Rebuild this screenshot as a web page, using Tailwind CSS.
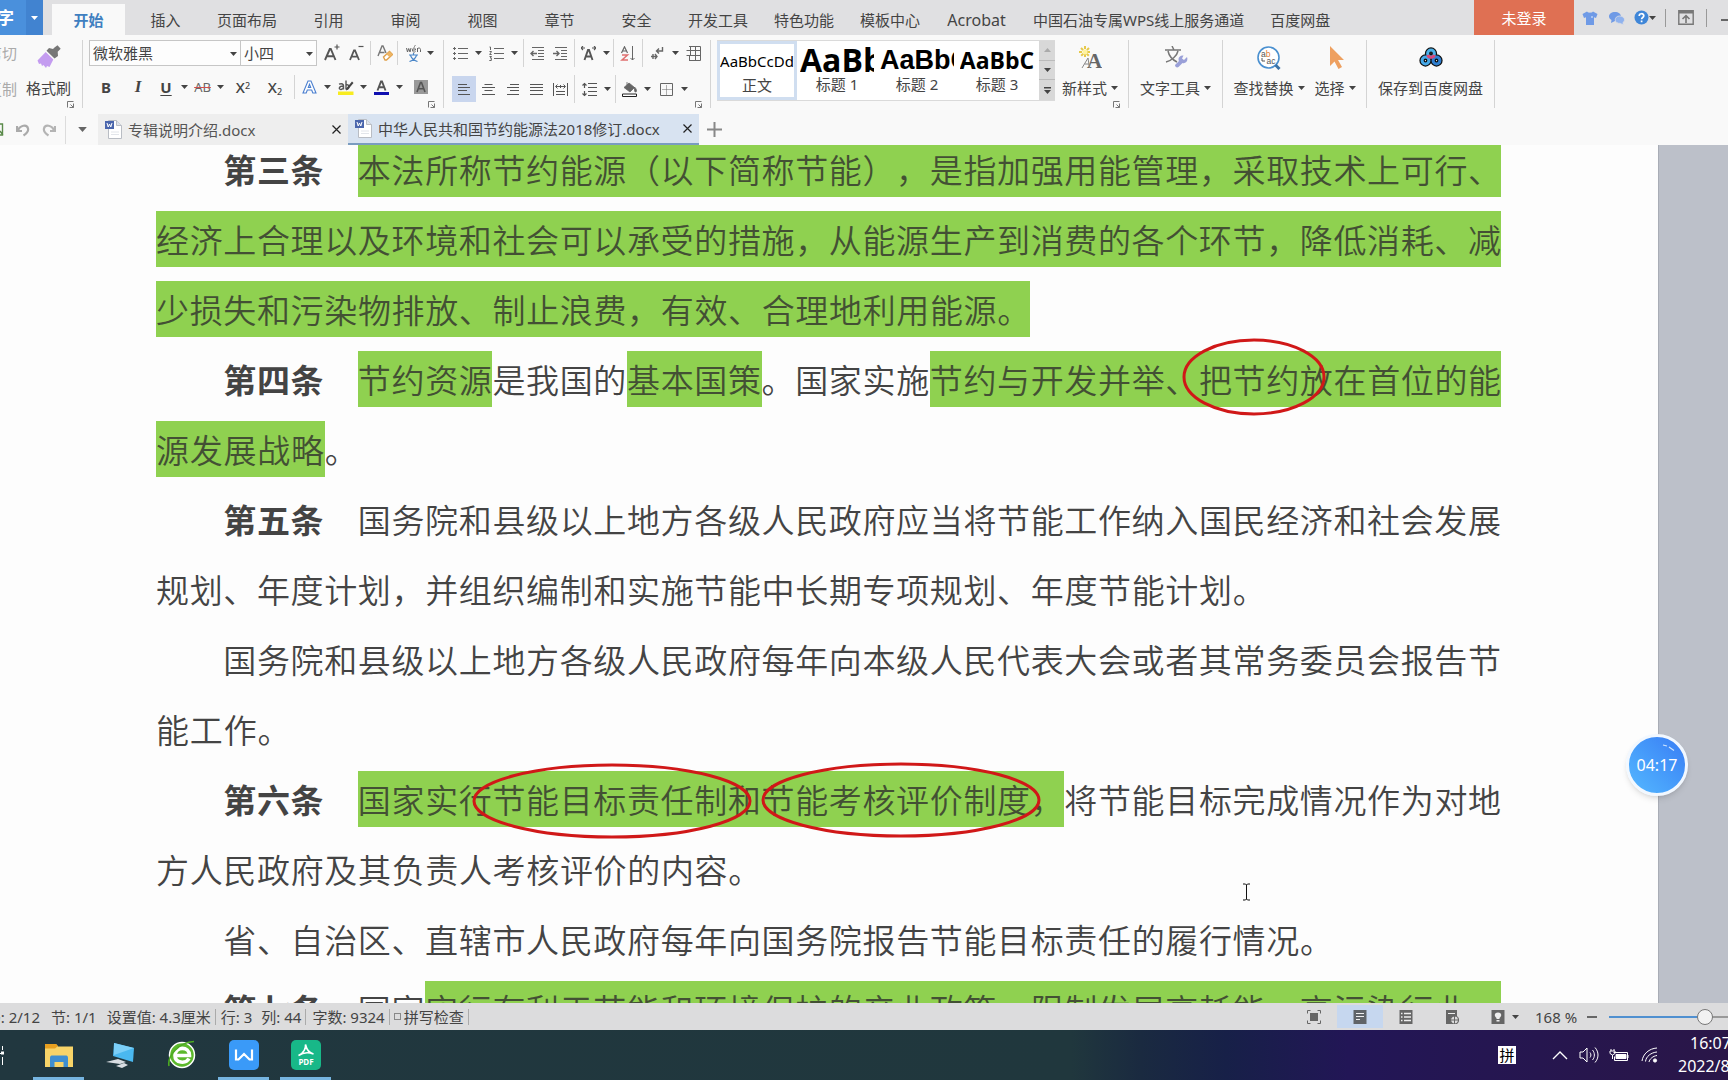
<!DOCTYPE html>
<html lang="zh-CN">
<head>
<meta charset="utf-8">
<title>中华人民共和国节约能源法2018修订.docx</title>
<script src="https://cdn.jsdelivr.net/npm/@tailwindcss/browser@4"></script>
</head>
<body class="flex h-screen flex-col overflow-hidden bg-[#f9f9f9] font-['Noto_Sans','Noto_Sans_CJK_SC',sans-serif] text-[15px] leading-5 text-[#444]">
<svg class="hidden">
  <symbol id="caret" viewBox="0 0 7 4"><path d="M0 0h7L3.500 4z" fill="currentColor"/></symbol>
  <symbol id="launcher" viewBox="0 0 7 7"><path d="M.5 6.500V.5h6M6.500 2.500v4h-4M3.500 3.500l3 3" fill="none" stroke="currentColor"/></symbol>
  <symbol id="doc" viewBox="0 0 17 19"><path d="M3.500 .5h8l5 5v13h-13z" fill="#fff" stroke="#b9bdc4"/><path d="M11.500 .5v5h5" fill="#dde3ec" stroke="#b9bdc4"/><path d="M0 1h9v8H0z" fill="#4a66ad"/><path d="M2 3l1.200 4L4.500 4l1.300 3L7 3" fill="none" stroke="#fff"/><path d="M6 12h8M6 14.500h8" stroke="#e2e5ea"/></symbol>
  <symbol id="close" viewBox="0 0 9 9"><path d="M.5.5l8 8M8.500.5l-8 8" stroke="currentColor" stroke-width="1.200" fill="none"/></symbol>
</svg>

<!-- menu tabs -->
<header class="flex h-[35px] shrink-0 whitespace-nowrap bg-[#e0e0e2]">
  <button class="flex w-[26px] shrink-0 items-center justify-end overflow-hidden bg-[#4a90dc] pr-3 text-[17px] font-bold text-white"><span>WPS文字</span></button>
  <button aria-label="菜单" class="flex w-[17px] shrink-0 items-center justify-center bg-[#4183d0] text-white"><svg class="h-1 w-[7px]"><use href="#caret"/></svg></button>
  <nav class="ml-[7px] flex flex-1 pt-1 [&>a]:flex [&>a]:min-w-[77px] [&>a]:shrink-0 [&>a]:items-center [&>a]:justify-center [&>a]:px-[13px]">
    <a href="#" class="border-x-2 border-transparent bg-[#f9f9f9] bg-clip-padding font-bold text-[#3f7fc0]">开始</a>
    <a href="#">插入</a><a href="#">页面布局</a><a href="#">引用</a><a href="#">审阅</a><a href="#">视图</a><a href="#">章节</a><a href="#">安全</a><a href="#">开发工具</a><a href="#">特色功能</a><a href="#">模板中心</a><a href="#" class="min-w-[87px]! text-[16px]">Acrobat</a><a href="#">中国石油专属WPS线上服务通道</a><a href="#">百度网盘</a>
  </nav>
  <button class="w-[100px] shrink-0 bg-[#df7053] text-white">未登录</button>
  <div class="flex shrink-0 items-center pl-2">
    <button aria-label="皮肤"><svg class="h-4 w-4" viewBox="0 0 16 16"><path d="M5 1.500c1 1.600 5 1.600 6 0l4.500 2.500-1.500 4-2-.8V15H4V7.200L2 8 .5 4z" fill="#6f9ae6"/><path d="M9 6h2v2H9z" fill="#a9c4f2"/></svg></button>
    <button aria-label="消息" class="ml-[10px]"><svg class="h-4 w-[18px]" viewBox="0 0 18 16"><path d="M7 2c3.500 0 6 2 6 4.500S10.500 11 7 11l-4 2 .5-3C2 9.300 1 8 1 6.500 1 4 3.500 2 7 2z" fill="#6f9ae6"/><path d="M11.500 6c3 0 5 1.600 5 3.700 0 1.300-.6 2.200-1.600 2.900l.5 2.400-3-1.600c-3 .2-5.200-1.400-5.200-3.500S8.800 6 11.500 6z" fill="#8fb2ee" stroke="#e0e0e2" stroke-width=".8"/></svg></button>
    <button aria-label="帮助" class="ml-2 flex items-center"><svg class="h-[15px] w-[15px]" viewBox="0 0 15 15"><circle cx="7.500" cy="7.500" r="7" fill="#3f86d8"/><path d="M5.200 6c0-3 4.600-3 4.600-.2 0 1.700-2.200 1.700-2.200 3.400M7.600 10.500v1.700" stroke="#fff" stroke-width="1.700" fill="none"/></svg><svg class="h-1 w-[7px]"><use href="#caret"/></svg></button>
    <span class="ml-[9px] h-[18px] w-px bg-[#999]"></span>
    <button aria-label="折叠功能区" class="ml-3"><svg class="h-[15px] w-4" viewBox="0 0 16 15"><path d="M.8.8h14.400v13.400H.8z" fill="none" stroke="#777" stroke-width="1.400"/><path d="M1 1h14v2.500H1z" fill="#777"/><path d="M8 13V6M4.500 9L8 5.700 11.500 9" fill="none" stroke="#777" stroke-width="1.600"/></svg></button>
    <span class="ml-3 h-[18px] w-px bg-[#999]"></span>
    <button aria-label="最小化" class="ml-[14px] mt-1 h-[2px] w-[7px] bg-[#666]"></button>
  </div>
</header>

<!-- ribbon -->
<section class="flex h-[79px] shrink-0 whitespace-nowrap pt-[5px] [&_svg]:shrink-0 [&_button]:shrink-0">
  <div class="relative flex h-[68px] border-r border-[#d4d4d4] pr-[11px]">
    <div class="flex w-[17px] flex-col gap-[10px] overflow-hidden text-[#aaa]">
      <button class="flex h-[26px] items-center justify-end">剪切</button>
      <button class="flex h-[26px] items-center justify-end">复制</button>
    </div>
    <button class="ml-[9px] flex flex-col items-center pt-[5px]">
      <svg class="h-6 w-6" viewBox="0 0 24 24"><path d="M17.500 2.500l3-2.200 3.200 3.500-3 3 .3 4.200-3.500 2.500L9.500 5.800 12 3l4 1z" fill="#777"/><path d="M8.700 7l7.600 7.500L12.500 22l-2.500-1-1 2-2.500-3-1.500 1-1-2.500-2 .5-1.500-3.500z" fill="#c49cf0"/></svg>
      <span class="mt-[9px]">格式刷</span>
    </button>
    <svg class="absolute bottom-0 right-2 h-[7px] w-[7px] text-[#777]"><use href="#launcher"/></svg>
  </div>

  <!-- font group -->
  <div class="relative flex h-[68px] w-[361px] shrink-0 flex-col gap-2 border-r border-[#d4d4d4] pl-[6px]">
    <div class="flex h-[26px] items-center">
      <div class="relative h-full w-[152px]"><select aria-label="字体" class="h-full w-full appearance-none border border-[#c6c6c6] bg-[#fdfdfd] pl-[3px]"><option>微软雅黑</option></select><svg class="absolute right-1 top-3 h-1 w-[7px]"><use href="#caret"/></svg></div>
      <div class="relative -ml-px h-full w-[77px]"><select aria-label="字号" class="h-full w-full appearance-none border border-[#c6c6c6] bg-[#fdfdfd] pl-[3px]"><option>小四</option></select><svg class="absolute right-1 top-3 h-1 w-[7px]"><use href="#caret"/></svg></div>
      <button aria-label="增大字号" class="ml-[3px] flex w-6 justify-center"><svg class="h-[18px] w-4" viewBox="0 0 16 18"><path d="M1 16L5.800 5h1L11.500 16M3 12.200h6.500" fill="none" stroke="#555" stroke-width="1.900"/><path d="M10.500 3h5M13 .5v5" stroke="#555" stroke-width="1.200"/></svg></button>
      <button aria-label="减小字号" class="flex w-6 justify-center"><svg class="h-[18px] w-4" viewBox="0 0 16 18"><path d="M2 16L6 6.500h1L11 16M3.700 12.700h5.600" fill="none" stroke="#555" stroke-width="1.800"/><path d="M10.500 2.500h5" stroke="#555" stroke-width="1.200"/></svg></button>
      <span class="mx-[2px] h-6 w-px bg-[#d4d4d4]"></span>
      <button aria-label="清除格式" class="flex w-6 justify-center"><svg class="h-4 w-4" viewBox="0 0 16 16"><path d="M1 11L5 1h1l3 7M2.500 7.500h5" fill="none" stroke="#777" stroke-width="1.400"/><path d="M6.500 12l6-5.500 3 3-6 5.500H8z" fill="#fff" stroke="#e0a04a" stroke-width="1.400"/><path d="M9.500 9.300l3-2.800 3 3-3 2.700z" fill="#edb565"/></svg></button>
      <span class="h-6 w-px bg-[#d4d4d4]"></span>
      <button aria-label="拼音指南" class="ml-[3px] flex w-6 justify-center"><svg class="h-[17px] w-[15px]" viewBox="0 0 15 17" fill="none"><path d="M.5 3l1 4 1.200-3.500L4 7l1-4M6.500 5h3C9.500 2 6.500 2.500 6.500 5s2 2.500 3 1.500M8 1.500l1.500-1M11.500 7V3M11.500 4.500c0-2 3-2 3 0V7" stroke="#666"/><path d="M3 10h9M7.500 8v2M4.500 10.500C5.500 13 8 15.500 11.500 16.500M10.500 10.500C9.500 13 7 15.500 3.500 16.500" stroke="#4a86c8" stroke-width="1.200"/></svg></button>
      <svg class="mx-[2px] h-1 w-[7px]"><use href="#caret"/></svg>
    </div>
    <div class="flex h-[26px] items-center pl-px">
      <button class="w-8 text-[15px] font-bold">B</button>
      <button class="w-8 font-['Liberation_Serif',serif] text-[17px] font-bold italic">I</button>
      <button class="w-6 text-[15px] font-bold underline underline-offset-2">U</button>
      <svg class="mx-[3px] h-1 w-[7px]"><use href="#caret"/></svg>
      <button class="w-[23px] text-[13px] text-[#666] line-through decoration-[#d05050]">AB</button>
      <svg class="mx-[3px] h-1 w-[7px]"><use href="#caret"/></svg>
      <button class="w-8 text-[15px] font-medium">X<sup class="text-[9px]">2</sup></button>
      <button class="w-8 text-[15px] font-medium">X<sub class="text-[9px]">2</sub></button>
      <span class="mx-[3px] h-6 w-px bg-[#d4d4d4]"></span>
      <button aria-label="文字效果" class="flex w-[23px] justify-center"><svg class="h-[14px] w-[15px]" viewBox="0 0 15 14"><path d="M1 13L6 1h3l5 12h-3.200L9.700 10H5.300l-1.100 3zM6.300 7.500h2.400L7.500 4.300z" fill="#fff" stroke="#4a7fd0" stroke-width="1.100"/></svg></button>
      <svg class="mx-[3px] h-1 w-[7px]"><use href="#caret"/></svg>
      <button aria-label="突出显示" class="flex w-[23px] justify-center"><svg class="h-[15px] w-4" viewBox="0 0 16 15"><path d="M0 11.500h15.500V15H0z" fill="#f8ec20"/><path d="M1 4.200c3-1 4.500 0 4.500 1.500V9.500M5.500 6C.5 6 .5 9.500 2.800 9.500 4 9.500 5.500 8.500 5.500 7M8 .5v9M8 5c4-1.500 4 4.500 0 4" fill="none" stroke="#555" stroke-width="1.400"/><path d="M14 1.500l1.500 1.500L10 9.500l-2 1 .5-2.500z" fill="#444"/></svg></button>
      <svg class="mx-[3px] h-1 w-[7px]"><use href="#caret"/></svg>
      <button aria-label="字体颜色" class="flex w-[23px] justify-center"><svg class="h-[15px] w-[15px]" viewBox="0 0 15 15"><path d="M0 12h15v3H0z" fill="#1010b0"/><path d="M3.500 10.500L7 1.500h1l3.500 9M4.800 7.300h5.400" fill="none" stroke="#555" stroke-width="1.900"/></svg></button>
      <svg class="mx-[3px] h-1 w-[7px]"><use href="#caret"/></svg>
      <button aria-label="字符底纹" class="ml-2 flex h-[14px] w-[14px] items-center justify-center bg-[#999]"><svg class="h-3 w-3" viewBox="0 0 12 12"><path d="M2 11L5.500 1.500h1L10 11M3.500 7.800h5" fill="none" stroke="#555" stroke-width="1.600"/></svg></button>
    </div>
    <svg class="absolute bottom-0 right-2 h-[7px] w-[7px] text-[#777]"><use href="#launcher"/></svg>
  </div>

  <!-- paragraph group -->
  <div class="relative flex h-[68px] w-[267px] shrink-0 flex-col gap-[10px] border-r border-[#d4d4d4] pl-[5px]">
    <div class="flex h-[26px] items-center [&>button]:flex [&>button]:w-[23px] [&>button]:justify-center [&>button>svg]:h-[15px] [&>button>svg]:w-[15px]">
      <button aria-label="项目符号"><svg viewBox="0 0 15 15" fill="none" stroke="#666"><path d="M5 2.500h10M5 7.500h10M5 12.500h10" stroke-width="1.200"/><path d="M0 2.500h3M1.500 1v3M0 7.500h3M1.500 6v3M0 12.500h3M1.500 11v3"/></svg></button>
      <svg class="mx-[3px] h-1 w-[7px]"><use href="#caret"/></svg>
      <button aria-label="编号"><svg viewBox="0 0 15 15" fill="none" stroke="#666"><path d="M5 2.500h10M5 7.500h10M5 12.500h10" stroke-width="1.200"/><path d="M.5 1h1v3M.5 5.500H2.500L.7 8.500h2M.5 10.500h2L1.300 12h1v2.500H.3"/></svg></button>
      <svg class="mx-[3px] h-1 w-[7px]"><use href="#caret"/></svg>
      <span class="mx-[2px] h-7 w-px bg-[#d4d4d4]"></span>
      <button aria-label="减少缩进"><svg viewBox="0 0 15 15" fill="none" stroke="#666"><path d="M2 1.500h12M8 4.500h6M8 7.500h6M8 10.500h6M2 13.500h12"/><path d="M7 7.500H1M3.500 5L1 7.500 3.500 10" stroke-width="1.400"/></svg></button>
      <button aria-label="增加缩进"><svg viewBox="0 0 15 15" fill="none" stroke="#666"><path d="M2 1.500h12M8 4.500h6M8 7.500h6M8 10.500h6M2 13.500h12"/><path d="M0 7.500h6M3.500 5L6 7.500 3.500 10" stroke-width="1.400"/></svg></button>
      <span class="mx-[2px] h-7 w-px bg-[#d4d4d4]"></span>
      <button aria-label="字符缩放"><svg viewBox="0 0 15 15" fill="none" stroke="#555"><path d="M3.500 14L7 4h1l3.500 10M4.800 10.500h5.400" stroke-width="1.900"/><path d="M0 2h4M2 0L0 2l2 2M15 2h-4M13 0l2 2-2 2" stroke-width="1.100"/></svg></button>
      <svg class="mx-[3px] h-1 w-[7px]"><use href="#caret"/></svg>
      <span class="mr-[2px] h-7 w-px bg-[#d4d4d4]"></span>
      <button aria-label="排序"><svg viewBox="0 0 15 15" fill="none"><path d="M1.500 7L4.500.8 7.500 7M2.500 5h4" stroke="#666" stroke-width="1.200"/><path d="M2 9h5.500L2 14h6" stroke="#e07070" stroke-width="1.500"/><path d="M12.500 0v14M10.500 12l2 2 2-2" stroke="#666"/></svg></button>
      <span class="mx-[3px] h-7 w-px bg-[#d4d4d4]"></span>
      <button aria-label="显示段落标记"><svg viewBox="0 0 15 15" fill="none" stroke="#666" stroke-width="1.400"><path d="M12.500 1v4H7M9 2.500L6.500 5 9 7.500M1 10.500h6M5 8l2 2.500L5 13M3 8v5"/></svg></button>
      <svg class="mx-[3px] h-1 w-[7px]"><use href="#caret"/></svg>
      <button aria-label="表格"><svg viewBox="0 0 15 15" fill="none" stroke="#666"><path d="M3 .5h11.500v14H3M.5 4.500h14M.5 9.500h14M4.500.5v9M9.500.5v14M3.500 9.500v5"/></svg></button>
    </div>
    <div class="flex h-[26px] items-center pl-[3px] [&>button]:flex [&>button]:h-full [&>button]:w-6 [&>button]:items-center [&>button]:justify-center [&>button>svg]:h-[15px] [&>button>svg]:w-[15px]">
      <button aria-label="左对齐" class="bg-[#c9d6ee]"><svg viewBox="0 0 15 15" stroke="#555"><path d="M1 2.500h9M1 5.500h12M1 8.500h9M1 12.500h12"/></svg></button>
      <button aria-label="居中"><svg viewBox="0 0 15 15" stroke="#555"><path d="M3.500 2.500h8M1 5.500h13M3.500 8.500h8M1 12.500h13"/></svg></button>
      <button aria-label="右对齐"><svg viewBox="0 0 15 15" stroke="#555"><path d="M5 2.500h9M2 5.500h12M5 8.500h9M2 12.500h12"/></svg></button>
      <button aria-label="两端对齐"><svg viewBox="0 0 15 15" stroke="#555"><path d="M1 2.500h13M1 5.500h13M1 8.500h13M1 12.500h13"/></svg></button>
      <button aria-label="分散对齐"><svg viewBox="0 0 15 15" fill="none" stroke="#555"><path d="M.5 1v13M14.500 1v13M3 9.500h9M3 12.500h9M3 4.500h9" /><path d="M4.500 2.500l-2 2 2 2M10.500 2.500l2 2-2 2M7.500 3v3"/></svg></button>
      <span class="mx-[2px] h-7 w-px bg-[#d4d4d4]"></span>
      <button aria-label="行距"><svg viewBox="0 0 15 15" fill="none" stroke="#555"><path d="M6 1.500h9M6 5.500h9M6 9.500h9M6 13.500h9"/><path d="M2.500 1v5M.5 3.500l2-2 2 2M2.500 9v5M.5 11.500l2 2 2-2" stroke-width="1.200"/></svg></button>
      <svg class="mx-[3px] h-1 w-[7px]"><use href="#caret"/></svg>
      <span class="mx-px h-7 w-px bg-[#d4d4d4]"></span>
      <button aria-label="底纹颜色"><svg viewBox="0 0 15 15"><path d="M2 5.500L7 1l5.500 4.500L8 10zM5 0v3M12.500 5c2 2 2.500 4 1.500 5-1 .5-1.500-1-1.500-2z" fill="#666" stroke="#666" stroke-width=".8"/><path d="M.5 12h14v2.500H.5z" fill="#fff" stroke="#222"/></svg></button>
      <svg class="mx-[3px] h-1 w-[7px]"><use href="#caret"/></svg>
      <button aria-label="边框"><svg viewBox="0 0 15 15" fill="none" stroke="#666"><path d="M1.500 1.500h12v12h-12z"/><path d="M3.500 7.500h9M7.500 3.500v9" stroke-dasharray="1 1"/></svg></button>
      <svg class="mx-[3px] h-1 w-[7px]"><use href="#caret"/></svg>
    </div>
    <svg class="absolute bottom-0 right-2 h-[7px] w-[7px] text-[#777]"><use href="#launcher"/></svg>
  </div>

  <!-- style gallery -->
  <div class="relative flex h-[68px] w-[418px] shrink-0 border-r border-[#d4d4d4] pl-[6px]">
    <div class="flex h-[61px] w-[338px] border-y border-[#dadada] bg-white [&>button]:flex [&>button]:h-full [&>button]:w-20 [&>button]:flex-col [&>button]:items-center [&>button]:overflow-hidden [&_b]:flex [&_b]:h-[34px] [&_b]:w-[74px] [&_b]:shrink-0 [&_b]:items-center [&_b]:overflow-hidden [&_b]:text-black">
      <button class="border-3 border-[#d0def0]"><b class="justify-center text-[15px] font-normal">AaBbCcDd</b><span class="-mt-[3px]">正文</span></button>
      <button class="pt-[2px]"><b class="font-['Open_Sans'] text-[32px]">AaBb</b><span class="-mt-[3px]">标题 1</span></button>
      <button class="pt-[2px]"><b class="font-['Liberation_Sans'] text-[27px]">AaBbC</b><span class="-mt-[3px]">标题 2</span></button>
      <button class="pt-[2px]"><b class="justify-center font-['Open_Sans'] text-[23px]">AaBbC</b><span class="-mt-[3px]">标题 3</span></button>
      <div class="ml-[2px] grid flex-1 grid-rows-3 divide-y divide-[#bbb] bg-[#d8d8d8] [&>button]:flex [&>button]:items-center [&>button]:justify-center">
        <button aria-label="上一行" class="text-[#aaa]"><svg class="h-1 w-[7px] rotate-180"><use href="#caret"/></svg></button>
        <button aria-label="下一行"><svg class="h-1 w-[7px]"><use href="#caret"/></svg></button>
        <button aria-label="更多样式"><svg class="h-[7px] w-[7px]" viewBox="0 0 7 7"><path d="M0 0h7v1.500H0zM0 3h7L3.500 7z" fill="#444"/></svg></button>
      </div>
    </div>
    <button class="ml-[7px] flex flex-col items-center pt-[6px]">
      <svg class="h-6 w-6" viewBox="0 0 24 24"><path d="M7 0v12M1 6h12M3 2l8 8M11 2l-8 8" stroke="#e6c94a" stroke-width="2" stroke-dasharray="3 1"/><circle cx="7" cy="6" r="2.500" fill="#fff3a0"/><text x="9" y="22" font-family="Liberation Serif" font-weight="bold" font-size="21" fill="#666">A</text><path d="M4 22L10 12l1.500 10M6.500 18h4.500" fill="none" stroke="#888"/></svg>
      <span class="mt-2 flex items-center gap-1">新样式<svg class="h-1 w-[7px]"><use href="#caret"/></svg></span>
    </button>
    <svg class="absolute bottom-0 right-2 h-[7px] w-[7px] text-[#777]"><use href="#launcher"/></svg>
  </div>

  <div class="flex h-[68px] w-[94px] shrink-0 justify-center border-r border-[#d4d4d4]">
    <button class="flex flex-col items-center pt-[6px]">
      <svg class="h-6 w-6" viewBox="0 0 24 24"><path d="M1 4h16M8 0l2 4M4 5c1 5 5 9 9 11M14 5c-1 5-7 10-12 11" fill="none" stroke="#777" stroke-width="1.500"/><path d="M23 11l-3 3-2-1.500 1.500-3c-4-.5-6 3-4.500 5.500l-4 4c0 2 2 3 3.500 2l4-4c3 1 6-2 4.500-6z" fill="#9aa0d8"/></svg>
      <span class="mt-2 flex items-center gap-1">文字工具<svg class="h-1 w-[7px]"><use href="#caret"/></svg></span>
    </button>
  </div>

  <div class="flex h-[68px] w-[144px] shrink-0 justify-center gap-[10px] border-r border-[#d4d4d4]">
    <button class="flex flex-col items-center pt-[6px]">
      <svg class="h-6 w-6" viewBox="0 0 24 24"><circle cx="11.500" cy="11.500" r="10.500" fill="#fff" stroke="#4a90d0" stroke-width="1.600"/><path d="M18.500 19l4 4" stroke="#3a72a8" stroke-width="3"/><text x="4" y="10.500" font-family="Liberation Sans" font-size="8.500" fill="#555">a<tspan fill="#e07a30">b</tspan></text><path d="M5 12v3h3" stroke="#555" fill="none"/><text x="9.500" y="18" font-family="Liberation Sans" font-size="8.500" fill="#555">ac</text></svg>
      <span class="mt-2 flex items-center gap-1">查找替换<svg class="h-1 w-[7px]"><use href="#caret"/></svg></span>
    </button>
    <button class="flex flex-col items-center pt-[6px]">
      <svg class="h-6 w-6" viewBox="0 0 24 24"><path d="M7 0v20l4.500-4.500 4 7.500 3.500-2-4-7h6z" fill="#eea060"/></svg>
      <span class="mt-2 flex items-center gap-1">选择<svg class="h-1 w-[7px]"><use href="#caret"/></svg></span>
    </button>
  </div>

  <div class="flex h-[68px] w-32 shrink-0 justify-center border-r border-[#d4d4d4]">
    <button class="flex flex-col items-center pt-[6px]">
      <svg class="h-6 w-6" viewBox="0 0 24 24" fill="none"><path d="M12 7.500l-6 6M12 7.500l6 6" stroke="#111" stroke-width="5"/><g stroke="#111" stroke-width="5.500"><circle cx="6.500" cy="14.500" r="3.400"/><circle cx="17.500" cy="14.500" r="3.400"/><circle cx="12" cy="7.500" r="3.400"/></g><circle cx="6.500" cy="14.500" r="3.400" stroke="#45a8e8" stroke-width="3"/><circle cx="17.500" cy="14.500" r="3.400" stroke="#2f7fd0" stroke-width="3"/><circle cx="12" cy="7.500" r="3.400" stroke="#4ab0e8" stroke-width="3"/><path d="M8.700 9c1 3 5.600 3 6.600 0" stroke="#d8487a" stroke-width="3"/></svg>
      <span class="mt-2">保存到百度网盘</span>
    </button>
  </div>
</section>

<!-- quick access and document tabs -->
<div class="flex h-[31px] shrink-0 items-center whitespace-nowrap [&_svg]:shrink-0">
  <svg class="h-4 w-1" viewBox="0 0 4 16"><path d="M0 2h2.500v11H0M0 9l3 4" fill="none" stroke="#5a8a4a" stroke-width="1.400"/></svg>
  <button aria-label="撤销" class="ml-3"><svg class="h-[14px] w-[14px]" viewBox="0 0 14 14"><path d="M1 3v5h5M2 7.500C4 2 11 1 12 5.500c.7 3-2 5.500-4.500 7" fill="none" stroke="#aaa" stroke-width="2.200"/></svg></button>
  <button aria-label="恢复" class="ml-3"><svg class="h-[14px] w-[14px]" viewBox="0 0 14 14"><path d="M13 3v5H8M12 7.500C10 2 3 1 2 5.500c-.7 3 2 5.500 4.500 7" fill="none" stroke="#b4b4b4" stroke-width="2.200"/></svg></button>
  <span class="ml-[9px] h-7 w-px bg-[#dcdcdc]"></span>
  <button aria-label="自定义快速访问" class="ml-3"><svg class="h-[5px] w-[9px] text-[#666]" viewBox="0 0 7 4"><use href="#caret"/></svg></button>
  <div class="ml-[11px] flex h-full w-[250px] shrink-0 items-center bg-[#eeeeee] px-[7px] text-[#555]">
    <svg class="h-[19px] w-[17px]"><use href="#doc"/></svg><a href="#" class="ml-[6px] flex-1">专辑说明介绍.docx</a><button aria-label="关闭" class="text-[#222]"><svg class="h-[9px] w-[9px]"><use href="#close"/></svg></button>
  </div>
  <div class="flex h-full w-[351px] shrink-0 items-center border-b-2 border-[#7a9cc0] bg-[#d8e3f1] px-[7px]">
    <svg class="h-[19px] w-[17px]"><use href="#doc"/></svg><a href="#" class="ml-[6px] flex-1">中华人民共和国节约能源法2018修订.docx</a><button aria-label="关闭" class="text-[#222]"><svg class="h-[9px] w-[9px]"><use href="#close"/></svg></button>
  </div>
  <button aria-label="新建标签" class="ml-2"><svg class="h-[15px] w-[15px]" viewBox="0 0 15 15"><path d="M0 7.500h15M7.500 0v15" stroke="#888" stroke-width="2"/></svg></button>
</div>

<!-- document, one line of the 40-column grid per block -->
<main class="relative flex min-h-0 flex-1 overflow-hidden bg-[#bcc0c9]">
  <article class="mr-[69px] flex-1 border-r border-[#a9adb6] bg-[#fdfdfd] pl-[156px] pr-[157px] [text-spacing-trim:space-all]">
    <div class="-mt-[9px] text-[33px] font-[350] leading-[70px] text-[#444] [text-align-last:justify] [&_mark]:bg-[#8fd150] [&_mark]:pb-1 [&_mark]:pt-[7px] [&_mark]:text-[#435034] [&_span]:block [&_b]:font-bold">
      <p><span class="pl-[5%]"><b>第三条</b>　<mark>本法所称节约能源（以下简称节能），是指加强用能管理，采取技术上可行、</mark></span><span><mark>经济上合理以及环境和社会可以承受的措施，从能源生产到消费的各个环节，降低消耗、减</mark></span><span class="w-26/40"><mark>少损失和污染物排放、制止浪费，有效、合理地利用能源。</mark></span></p>
      <p><span class="pl-[5%]"><b>第四条</b>　<mark>节约资源</mark>是我国的<mark>基本国策</mark>。国家实施<mark>节约与开发并举、把节约放在首位的能</mark></span><span class="w-6/40"><mark>源发展战略</mark>。</span></p>
      <p><span class="pl-[5%]"><b>第五条</b>　国务院和县级以上地方各级人民政府应当将节能工作纳入国民经济和社会发展</span><span class="w-33/40">规划、年度计划，并组织编制和实施节能中长期专项规划、年度节能计划。</span></p>
      <p><span class="pl-[5%]">国务院和县级以上地方各级人民政府每年向本级人民代表大会或者其常务委员会报告节</span><span class="w-4/40">能工作。</span></p>
      <p><span class="pl-[5%]"><b>第六条</b>　<mark>国家实行节能目标责任制和节能考核评价制度，</mark>将节能目标完成情况作为对地</span><span class="w-18/40">方人民政府及其负责人考核评价的内容。</span></p>
      <p><span class="w-35/40 pl-[5%]">省、自治区、直辖市人民政府每年向国务院报告节能目标责任的履行情况。</span></p>
      <p><span class="pl-[5%]"><b>第七条</b>　国家<mark>实行有利于节能和环境保护的产业政策，限制发展高耗能、高污染行业，</mark></span></p>
    </div>
  </article>
  <svg class="pointer-events-none absolute left-0 top-0 h-[858px] w-[1658px]" fill="none" stroke="#d01818" stroke-width="3">
    <ellipse cx="1254" cy="232" rx="70" ry="37"/><ellipse cx="612" cy="656" rx="138" ry="36"/><ellipse cx="901" cy="655" rx="138" ry="36"/>
    <path d="M1243 739h2.500l1 1 1-1h2.500M1246.500 740v14M1243 755h2.500l1-1 1 1h2.500" stroke="#111" stroke-width="1"/>
  </svg>
  <div class="absolute right-10 top-[589px] flex h-[62px] w-[62px] items-center justify-center rounded-full border-3 border-[#f2f8ff] bg-linear-to-tr from-[#55b8ff] to-[#3a7cf4] text-[16px] text-white shadow-md">04:17<svg class="absolute right-2 top-1 h-3 w-4" viewBox="0 0 16 12"><path d="M2 4l4 1M8 6l5 3.500" stroke="#cfe4ff" stroke-width="1.200"/></svg></div>
</main>

<!-- status bar -->
<footer class="flex h-[27px] shrink-0 items-center whitespace-nowrap bg-[#dcdcdd] text-[15px]">
  <span class="flex w-10 shrink-0 justify-end overflow-hidden"><span>页码: 2/12</span></span>
  <span class="ml-[11px]">节: 1/1</span>
  <span class="ml-[10px] border-r border-[#aaa] pr-1 leading-4">设置值: 4.3厘米</span>
  <span class="ml-[5px]">行: 3</span>
  <span class="ml-[9px] border-r border-[#aaa] pr-1 leading-4">列: 44</span>
  <span class="ml-[6px] border-r border-[#aaa] pr-1 leading-4">字数: 9324</span>
  <label class="ml-1 flex items-center gap-[3px] border-r border-[#aaa] pr-1 leading-4"><input type="checkbox" class="h-[7px] w-[7px] appearance-none border border-[#888]">拼写检查</label>
  <div class="ml-auto flex h-full shrink-0 items-center [&>button]:flex [&>button]:h-[23px] [&>button]:w-[46px] [&>button]:items-center [&>button]:justify-center [&>button>svg]:h-[14px] [&>button>svg]:w-[14px]">
    <button aria-label="全屏"><svg viewBox="0 0 14 14"><path d="M3 3h8v8H3z" fill="#666"/><path d="M.5 3.500v-3h3M10.500.5h3v3M13.500 10.500v3h-3M3.500 13.500h-3v-3" fill="none" stroke="#666"/></svg></button>
    <button aria-label="页面视图" class="bg-[#c6d7ef]"><svg viewBox="0 0 14 14"><path d="M.5 0h13v14H.5z" fill="#606468"/><path d="M3 3.500h8M3 6.500h8M3 9.500h4" stroke="#eee"/></svg></button>
    <button aria-label="大纲"><svg viewBox="0 0 14 14"><path d="M.5 0h13v14H.5z" fill="#666"/><path d="M2 3.500h1.500M5 3.500h7M2 7h1.500M5 7h7M2 10.500h1.500M5 10.500h7" stroke="#eee" stroke-width="1.300"/></svg></button>
    <button aria-label="Web版式"><svg viewBox="0 0 14 14"><path d="M1 0h11v14H1z" fill="#666"/><path d="M3 3.500h7" stroke="#eee"/><circle cx="9.500" cy="10" r="4" fill="#ddd" stroke="#666" stroke-width="1.200"/><path d="M9.500 6v8M6 10h7.500" stroke="#666"/></svg></button>
    <button aria-label="护眼模式"><svg viewBox="0 0 14 14"><path d="M.5 0h13v14H.5z" fill="#666"/><path d="M7 2.500c4 0 4 4 1.500 5.500V9h-3V8C3 6.500 3 2.500 7 2.500zM5.500 10h3v1.500h-3z" fill="#eee"/></svg></button>
    <svg class="-ml-[9px] h-1 w-[7px]"><use href="#caret"/></svg>
    <span class="ml-4 w-[46px]">168 %</span>
    <span class="ml-[6px] h-[2px] w-[10px] bg-[#666]"></span>
    <input type="range" aria-label="显示比例" value="85" class="ml-3 h-4 w-[119px] appearance-none bg-[linear-gradient(to_right,#5090d0_0_96px,#999_96px)] bg-[length:100%_2px] bg-center bg-no-repeat [&::-webkit-slider-thumb]:h-4 [&::-webkit-slider-thumb]:w-4 [&::-webkit-slider-thumb]:appearance-none [&::-webkit-slider-thumb]:rounded-full [&::-webkit-slider-thumb]:border [&::-webkit-slider-thumb]:border-[#777] [&::-webkit-slider-thumb]:bg-[#f2f2f2]">
  </div>
</footer>

<!-- taskbar -->
<div class="flex h-[50px] shrink-0 items-center whitespace-nowrap bg-[linear-gradient(to_right,#21373f_0%,#20373d_62%,#1a2a40_66%,#172048_71%,#221656_78%,#2a1648_100%)] text-white [&_svg]:shrink-0">
  <svg class="h-5 w-1" viewBox="0 0 4 20"><path d="M2.500 1v4M2.500 12v8M0 8.500h4" stroke="#fff" stroke-width="1"/><path d="M1 6.500h3v3H1z" fill="#fff"/></svg>
  <button aria-label="文件资源管理器" class="ml-[29px] flex h-full w-[51px] items-center justify-center border-b-3 border-[#76b4e0] pt-[3px]"><svg class="h-7 w-7" viewBox="0 0 28 28"><path d="M0 3h11l2 2.500h15V26H0z" fill="#f8d468"/><path d="M0 3h11l2 2-3 2.500H0z" fill="#e8a020"/><path d="M5 26V17c0-2 1-2.500 2.500-2.500h13c1.500 0 2.500.5 2.500 2.500v9h-4.500v-5h-9v5z" fill="#3f8fd0"/></svg></button>
  <button aria-label="此电脑" class="ml-[10px] flex h-full w-[51px] items-center justify-center"><svg class="h-7 w-7" viewBox="0 0 28 28"><path d="M8 2l20 5-1 14L7 15z" fill="#4ab8f0"/><path d="M8 2l20 5-20 7z" fill="#7ccff8"/><path d="M0 21l12-3 8 3-6 2zM10 25l8-3 4 2-6 3z" fill="#d8dde2"/></svg></button>
  <button aria-label="浏览器" class="ml-[11px] flex h-full w-[51px] items-center justify-center"><svg class="h-[30px] w-[30px]" viewBox="0 0 30 30"><circle cx="15" cy="15" r="12.500" fill="#5cb82c" stroke="#fff" stroke-width="1.500"/><path d="M8 15.500h14.500C22.500 6 8 6 8 15.500c0 8 11 8.500 14 3" fill="none" stroke="#fff" stroke-width="3.600"/><path d="M2 26C0 16 12 2 27 1.500" fill="none" stroke="#4caa22" stroke-width="1.600"/></svg></button>
  <button aria-label="WPS" class="ml-[11px] flex h-full w-[51px] items-center justify-center border-b-3 border-[#76b4e0] pt-[3px]"><svg class="h-[30px] w-[30px]" viewBox="0 0 30 30"><rect width="30" height="30" rx="5" fill="#3a9af8"/><path d="M7 9.500v10h2.500l5.500-5.500 5.500 5.500H23v-10" fill="none" stroke="#fff" stroke-width="2.200"/></svg></button>
  <button aria-label="PDF" class="ml-[11px] flex h-full w-[51px] items-center justify-center border-b-3 border-[#76b4e0] pt-[3px]"><svg class="h-[30px] w-[30px]" viewBox="0 0 30 30"><rect width="30" height="30" rx="5" fill="#18b888"/><path d="M7.500 15.500C13 13 15 8 14.500 4.500 15.500 9 18 13 22.500 14 17 12 12 12.500 7.500 15.500z" fill="none" stroke="#fff" stroke-width="1.600"/><text x="15" y="25" text-anchor="middle" font-family="Noto Sans" font-weight="bold" font-size="8" fill="#fff">PDF</text></svg></button>
  <div class="ml-auto flex shrink-0 items-center">
    <span class="flex h-[18px] w-[18px] items-center justify-center bg-white text-black">拼</span>
    <svg class="ml-9 h-[10px] w-4" viewBox="0 0 16 10"><path d="M1 9l7-7 7 7" fill="none" stroke="#fff" stroke-width="1.400"/></svg>
    <svg class="ml-[11px] h-[18px] w-5" viewBox="0 0 20 18" fill="none" stroke="#fff"><path d="M1 6h3l4-4v14l-4-4H1z"/><path d="M11 6.500c1.200 1.500 1.200 3.500 0 5M13.500 4c2.500 3 2.500 7 0 10M16 1.500c4 4.500 4 10.500 0 15"/></svg>
    <svg class="ml-[10px] h-[14px] w-5" viewBox="0 0 20 14" fill="none" stroke="#fff"><path d="M4.500 4.500h14v8h-13v-4"/><path d="M7 6.500h10v4H7z" fill="#fff"/><path d="M19 7v3M1 3h5v2.500L3.500 7 1 5.500zM2 1v2M5 1v2M3.500 7v4" /></svg>
    <svg class="ml-3 h-4 w-[17px]" viewBox="0 0 17 16" fill="none" stroke="#fff"><path d="M1 14C2 7 8 1.500 16 1M4.500 14.500C5 9.500 10 5.500 16 5M8 15c.5-3 4-6 8-6.500"/><circle cx="14" cy="13.500" r="1.600" fill="#fff"/></svg>
    <time class="ml-5 flex w-[50px] flex-col items-start text-[16px] leading-[23px]"><span class="pl-3">16:07</span><span>2022/8</span></time>
  </div>
</div>
</body>
</html>
